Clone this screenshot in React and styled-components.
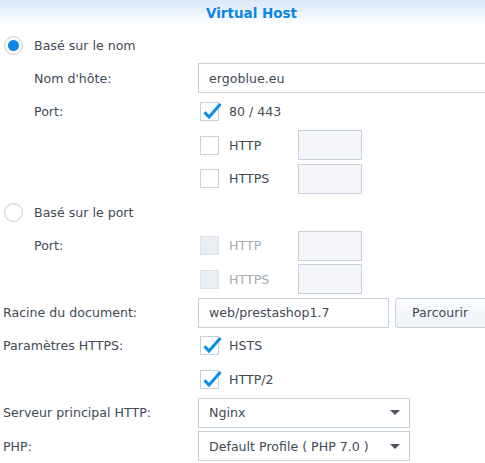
import React from "react";
import styled, { createGlobalStyle } from "styled-components";

const Global = createGlobalStyle`
  html, body { margin: 0; padding: 0; background: #fff; }
  body {
    font-family: "DejaVu Sans", Verdana, sans-serif;
    font-size: 12.6px;
    color: #414b55;
    overflow: hidden;
  }
  * { box-sizing: border-box; }
`;

const Page = styled.div`
  width: 485px;
  height: 463px;
  overflow: hidden;
  background: #fff;
`;

const Header = styled.div`
  height: 25px;
  background: linear-gradient(#d9e8f8, #ffffff);
  display: flex;
  align-items: center;
  justify-content: center;
  padding-left: 18px;
`;

const Title = styled.div`
  font-weight: bold;
  font-size: 13.5px;
  color: #0b86e2;
`;

const Form = styled.div`
  display: flex;
  flex-direction: column;
  gap: 4.45px;
  padding: 5.5px 0 0 3px;
`;

const Row = styled.div`
  display: flex;
  align-items: center;
  height: 29px;
  white-space: nowrap;
`;

const Label = styled.div`
  flex: none;
  width: 195px;
  padding-left: ${(p) => (p.$indent ? "31px" : "0")};
`;

const RadioCircle = styled.div`
  flex: none;
  width: 19px;
  height: 19px;
  margin-left: 1px;
  border-radius: 50%;
  border: 1px solid #cbd3dc;
  background: #fff;
  box-shadow: inset 0 0 0 1px #f1f4f7;
  display: flex;
  align-items: center;
  justify-content: center;
  &::after {
    content: "";
    display: ${(p) => (p.$checked ? "block" : "none")};
    width: 11px;
    height: 11px;
    border-radius: 50%;
    background: #0a86e8;
  }
`;

const RadioText = styled.span`
  margin-left: 11px;
`;

const CheckWrap = styled.div`
  display: flex;
  align-items: center;
  margin-left: 2px;
`;

const Box = styled.div`
  position: relative;
  flex: none;
  width: 19px;
  height: 19px;
  border: 1px solid ${(p) => (p.$disabled ? "#dbe2e9" : "#c9d2db")};
  background: ${(p) => (p.$disabled ? "#e9eef3" : "#fff")};
  svg {
    position: absolute;
    left: 1px;
    top: -3px;
  }
`;

const CheckText = styled.span`
  margin-left: 10px;
  width: ${(p) => (p.$w ? p.$w + "px" : "auto")};
  color: ${(p) => (p.$disabled ? "#a3abb4" : "inherit")};
`;

const TextBox = styled.div`
  flex: none;
  height: 30px;
  width: ${(p) => p.$w}px;
  border: 1px solid #c6d0da;
  background: ${(p) => (p.$muted ? "#f4f6f9" : "#fff")};
  padding: 0 10px;
  display: flex;
  align-items: center;
  overflow: hidden;
`;

const Button = styled.div`
  flex: none;
  margin-left: 6px;
  height: 30px;
  width: 100px;
  border: 1px solid #c6d0da;
  border-radius: 3px;
  background: linear-gradient(#fbfcfe, #eef2f7);
  padding-left: 16px;
  display: flex;
  align-items: center;
`;

const Select = styled(TextBox)`
  justify-content: space-between;
  padding-right: 9px;
`;

const Arrow = styled.span`
  width: 0;
  height: 0;
  border-left: 5px solid transparent;
  border-right: 5px solid transparent;
  border-top: 5px solid #4a5560;
`;

const Check = () => (
  <svg width="20" height="20" viewBox="0 0 20 20">
    <path d="M2.5 12.2 L7 17 L18.5 4" fill="none" stroke="#0a8ee8" strokeWidth="3" strokeLinecap="butt" strokeLinejoin="miter" />
  </svg>
);

const CheckItem = ({ checked, disabled, label, w }) => (
  <CheckWrap>
    <Box $disabled={disabled}>{checked && <Check />}</Box>
    <CheckText $w={w} $disabled={disabled}>{label}</CheckText>
  </CheckWrap>
);

export default function App() {
  return (
    <Page>
      <Global />
      <Header>
        <Title>Virtual Host</Title>
      </Header>
      <Form>
        <Row>
          <RadioCircle $checked />
          <RadioText>Basé sur le nom</RadioText>
        </Row>
        <Row>
          <Label $indent>Nom d'hôte:</Label>
          <TextBox $w={300}>ergoblue.eu</TextBox>
        </Row>
        <Row>
          <Label $indent>Port:</Label>
          <CheckItem checked label="80 / 443" />
        </Row>
        <Row>
          <Label />
          <CheckItem label="HTTP" w={69} />
          <TextBox $w={64} $muted />
        </Row>
        <Row>
          <Label />
          <CheckItem label="HTTPS" w={69} />
          <TextBox $w={64} $muted />
        </Row>
        <Row>
          <RadioCircle />
          <RadioText>Basé sur le port</RadioText>
        </Row>
        <Row>
          <Label $indent>Port:</Label>
          <CheckItem disabled label="HTTP" w={69} />
          <TextBox $w={64} $muted />
        </Row>
        <Row>
          <Label />
          <CheckItem disabled label="HTTPS" w={69} />
          <TextBox $w={64} $muted />
        </Row>
        <Row>
          <Label>Racine du document:</Label>
          <TextBox $w={191}>web/prestashop1.7</TextBox>
          <Button>Parcourir</Button>
        </Row>
        <Row>
          <Label>Paramètres HTTPS:</Label>
          <CheckItem checked label="HSTS" />
        </Row>
        <Row>
          <Label />
          <CheckItem checked label="HTTP/2" />
        </Row>
        <Row>
          <Label>Serveur principal HTTP:</Label>
          <Select $w={212}>
            <span>Nginx</span>
            <Arrow />
          </Select>
        </Row>
        <Row>
          <Label>PHP:</Label>
          <Select $w={212}>
            <span>Default Profile ( PHP 7.0 )</span>
            <Arrow />
          </Select>
        </Row>
      </Form>
    </Page>
  );
}
